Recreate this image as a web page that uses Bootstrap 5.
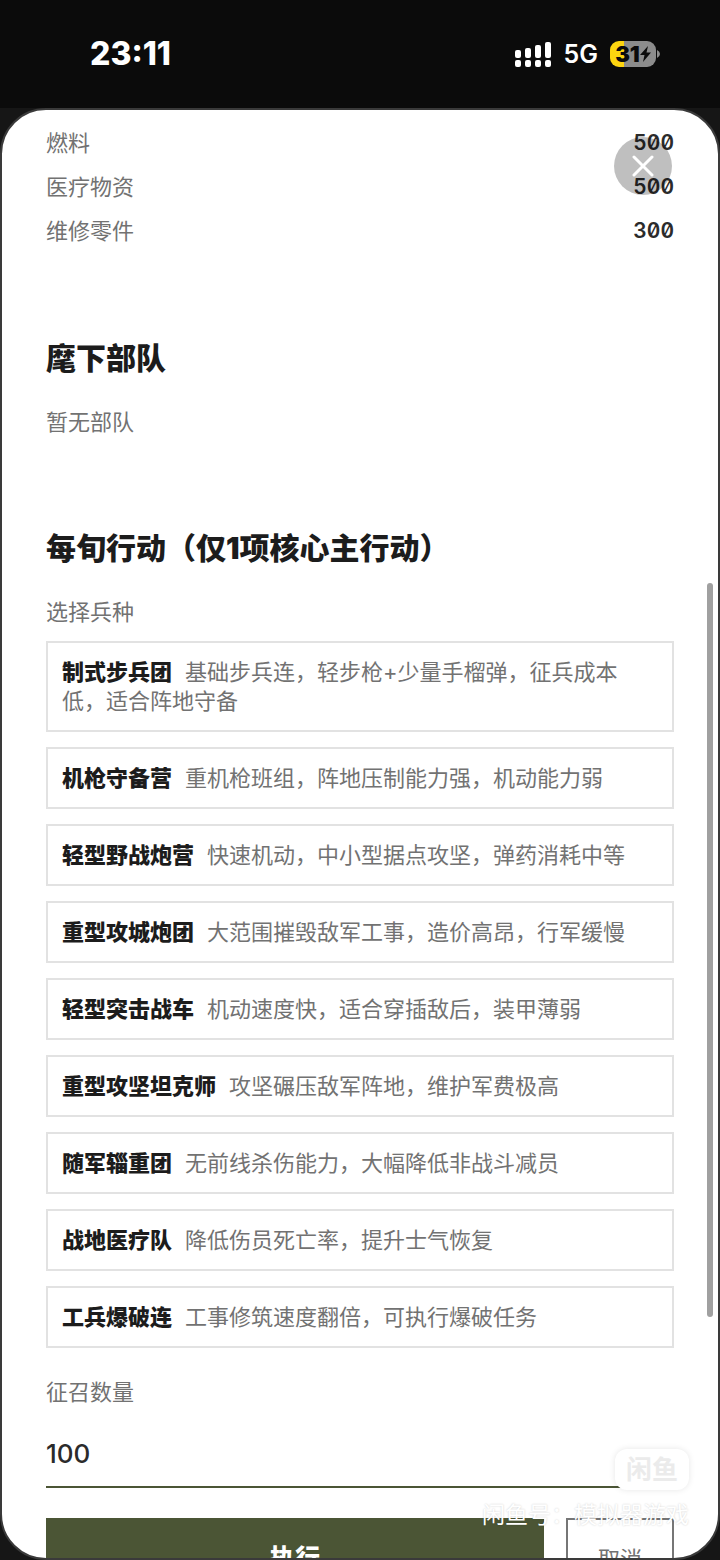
<!DOCTYPE html>
<html lang="zh-CN">
<head>
<meta charset="utf-8">
<meta name="viewport" content="width=device-width, initial-scale=1">
<title>麾下部队</title>
<link href="https://cdn.jsdelivr.net/npm/bootstrap@5.3.0/dist/css/bootstrap.min.css" rel="stylesheet">
<style>
  body { background: #0b0b0b; color: #1c1c1c; font-family: Inter, "Noto Sans CJK SC", sans-serif; font-size: 22px; line-height: 32px; }
  .status-bar { height: 108px; padding: 0 60px 0 90px; color: #fff; }
  .clock { font-size: 32px; font-weight: 800; }
  .network { font-size: 25px; font-weight: 600; }
  .battery { width: 46px; height: 26px; border-radius: 9px; background: linear-gradient(90deg, #fdd510 14px, #8c8c8c 14px); color: #0b0b0b; font-size: 22px; font-weight: 900; line-height: 26px; }
  .stage { min-height: 0; background: #161616; }
  .sheet { border: 2px solid #3a3a3a; border-radius: 46px; background: #fff; }
  .sheet-body { padding: 11px 44px 40px; scrollbar-width: none; }
  .sheet-body::-webkit-scrollbar { display: none; }
  .soft { color: #727272; }
  .stock-row { height: 44px; }
  .stock-value { color: #2b2b2b; font-size: 21px; font-weight: 600; font-variant-numeric: slashed-zero tabular-nums; }
  .section-title { font-size: 30px; line-height: 40px; font-weight: 900; margin: 85px 0 28px; }
  .section-title.later { margin-top: 90px; }
  .unit-list { gap: 15px; margin: 13px 0 28px; }
  .unit { border: 2px solid #e2e2e2; background: #fff; padding: 15px 14px 14px; line-height: 29px; color: #727272; }
  .unit strong { color: #1c1c1c; font-weight: 900; margin-right: 13px; }
  .amount { height: 68px; margin-top: 12px; border: 0; border-bottom: 2px solid #4b5535; border-radius: 0; padding: 0; font-size: 26px; font-weight: 500; color: #2b2b2b; }
  .actions { margin-top: 30px; gap: 22px; }
  .actions button { height: 82px; border-radius: 0; }
  .run { background: #4b5535; border: 0; color: #fff; font-size: 25px; font-weight: 900; }
  .cancel { width: 108px; background: #fff; border: 2px solid #767676; color: #727272; }
  .close-btn { top: 27px; right: 46px; width: 58px; height: 58px; background: rgba(0, 0, 0, .25); }
  .thumb { top: 473px; bottom: 241px; right: 5px; width: 6px; border-radius: 3px; background: #a0a0a0; }
  .stamp { right: 29px; bottom: 27px; pointer-events: none; }
  .stamp-logo { width: 74px; height: 41px; border-radius: 12px; background: #fff; box-shadow: 0 0 6px rgba(0, 0, 0, .1); color: #ebebeb; font-size: 26px; font-weight: 700; }
  .stamp-text { margin-top: 9px; color: #fff; font-size: 23px; text-shadow: 0 0 2px rgba(0, 0, 0, .2); }
</style>
</head>
<body>
<div class="vh-100 d-flex flex-column overflow-hidden">
  <header class="status-bar d-flex align-items-center justify-content-between flex-shrink-0">
    <span class="clock">23:11</span>
    <div class="d-flex align-items-center">
      <svg width="37" height="27" viewBox="0 0 37 27" fill="#fff" aria-hidden="true">
        <rect x="0" y="9" width="6" height="8" rx="2"/><rect x="10" y="7" width="6" height="10" rx="2"/><rect x="20" y="4" width="6" height="13" rx="2"/><rect x="30" y="1" width="6" height="16" rx="2"/>
        <rect x="0" y="19" width="6" height="7" rx="2"/><rect x="10" y="19" width="6" height="7" rx="2"/><rect x="20" y="19" width="6" height="7" rx="2"/><rect x="30" y="19" width="6" height="7" rx="2"/>
      </svg>
      <span class="network ms-2 me-2 px-1">5G</span>
      <span class="battery d-flex align-items-center justify-content-center">31<svg width="11" height="16" viewBox="0 0 11 16" fill="#0b0b0b" aria-hidden="true"><path d="M8 0 0 9h4.500L3 16l8-9.500H6.500z"/></svg></span>
      <svg width="4" height="8" viewBox="0 0 4 8" fill="#8c8c8c" aria-hidden="true"><path d="M1 0q3 1.500 3 4T1 8z"/></svg>
    </div>
  </header>

  <div class="stage flex-grow-1 d-flex">
    <main class="sheet position-relative flex-grow-1 overflow-hidden">
      <div class="sheet-body h-100 overflow-auto">
        <div class="stock-row d-flex align-items-center justify-content-between"><span class="soft">燃料</span><span class="stock-value">500</span></div>
        <div class="stock-row d-flex align-items-center justify-content-between"><span class="soft">医疗物资</span><span class="stock-value">500</span></div>
        <div class="stock-row d-flex align-items-center justify-content-between"><span class="soft">维修零件</span><span class="stock-value">300</span></div>

        <h2 class="section-title">麾下部队</h2>
        <p class="soft mb-0">暂无部队</p>

        <h2 class="section-title later">每旬行动（仅1项核心主行动）</h2>
        <div class="soft" id="unit-label">选择兵种</div>
        <div class="unit-list d-flex flex-column" role="group" aria-labelledby="unit-label">
          <button type="button" class="unit text-start"><strong>制式步兵团</strong>基础步兵连，轻步枪+少量手榴弹，征兵成本低，适合阵地守备</button>
          <button type="button" class="unit text-start"><strong>机枪守备营</strong>重机枪班组，阵地压制能力强，机动能力弱</button>
          <button type="button" class="unit text-start"><strong>轻型野战炮营</strong>快速机动，中小型据点攻坚，弹药消耗中等</button>
          <button type="button" class="unit text-start"><strong>重型攻城炮团</strong>大范围摧毁敌军工事，造价高昂，行军缓慢</button>
          <button type="button" class="unit text-start"><strong>轻型突击战车</strong>机动速度快，适合穿插敌后，装甲薄弱</button>
          <button type="button" class="unit text-start"><strong>重型攻坚坦克师</strong>攻坚碾压敌军阵地，维护军费极高</button>
          <button type="button" class="unit text-start"><strong>随军辎重团</strong>无前线杀伤能力，大幅降低非战斗减员</button>
          <button type="button" class="unit text-start"><strong>战地医疗队</strong>降低伤员死亡率，提升士气恢复</button>
          <button type="button" class="unit text-start"><strong>工兵爆破连</strong>工事修筑速度翻倍，可执行爆破任务</button>
        </div>

        <label class="soft d-block" for="amount">征召数量</label>
        <input class="amount form-control shadow-none" id="amount" type="text" inputmode="numeric" value="100">

        <div class="actions d-flex">
          <button type="button" class="btn run flex-grow-1">执行</button>
          <button type="button" class="cancel flex-shrink-0">取消</button>
        </div>
      </div>

      <button type="button" class="close-btn position-absolute border-0 rounded-circle p-0 d-flex align-items-center justify-content-center" aria-label="关闭">
        <svg width="22" height="22" viewBox="0 0 22 22" fill="none" stroke="#fff" stroke-width="3" stroke-linecap="round" aria-hidden="true"><path d="M2 2 20 20M20 2 2 20"/></svg>
      </button>
      <div class="thumb position-absolute"></div>
      <div class="stamp position-absolute d-flex flex-column align-items-end">
        <span class="stamp-logo d-flex align-items-center justify-content-center">闲鱼</span>
        <span class="stamp-text">闲鱼号：模拟器游戏</span>
      </div>
    </main>
  </div>
</div>
<script src="https://cdn.jsdelivr.net/npm/bootstrap@5.3.0/dist/js/bootstrap.bundle.min.js"></script>
</body>
</html>
